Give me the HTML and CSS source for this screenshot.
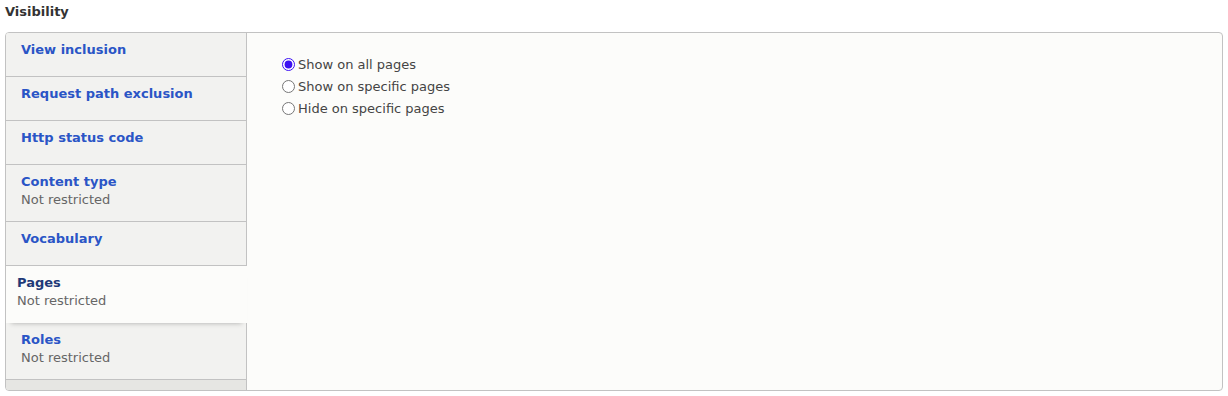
FILE: index.html
```html
<!DOCTYPE html>
<html lang="en">
<head>
  <meta charset="UTF-8">
  <title>Visibility</title>
  <link rel="stylesheet" href="styles.css">
</head>
<body>
  <div class="field">
    <div class="field-label">Visibility</div>
    <div class="vertical-tabs">
      <ul class="tabs-menu">
        <li class="tab"><a href="#">View inclusion</a><span class="summary"></span></li>
        <li class="tab"><a href="#">Request path exclusion</a><span class="summary"></span></li>
        <li class="tab"><a href="#">Http status code</a><span class="summary"></span></li>
        <li class="tab"><a href="#">Content type</a><span class="summary">Not restricted</span></li>
        <li class="tab"><a href="#">Vocabulary</a><span class="summary"></span></li>
        <li class="tab is-selected"><a href="#">Pages</a><span class="summary">Not restricted</span></li>
        <li class="tab"><a href="#">Roles</a><span class="summary">Not restricted</span></li>
      </ul>
      <div class="tabs-pane">
        <label class="option"><input type="radio" name="pages" checked> Show on all pages</label>
        <label class="option"><input type="radio" name="pages"> Show on specific pages</label>
        <label class="option"><input type="radio" name="pages"> Hide on specific pages</label>
      </div>
    </div>
  </div>
</body>
</html>
```

FILE: styles.css
```css
body {
  margin: 0;
  font-family: 'DejaVu Sans', sans-serif;
  font-size: 13px;
  color: #333;
  background: #fff;
}
.field {
  padding: 3px 5px;
}
.field-label {
  font-weight: bold;
  line-height: 18px;
  margin-bottom: 11px;
  color: #333;
}
.vertical-tabs {
  display: flex;
  height: 357px;
  border: 1px solid #c2c2c2;
  border-radius: 4px;
  background: #fcfcfa;
  overflow: hidden;
}
.tabs-menu {
  list-style: none;
  margin: 0;
  padding: 0;
  width: 240px;
  flex-shrink: 0;
  background: #e6e6e3;
  border-right: 1px solid #c2c2c2;
}
.tab {
  background: #f2f2f0;
  border-bottom: 1px solid #c2c2c2;
  padding: 8px 15px 12px;
  line-height: 18px;
}
.tab a {
  display: block;
  color: #2a55c6;
  font-weight: bold;
  text-decoration: none;
}
.tab .summary {
  display: block;
  min-height: 5px;
  color: #666;
}
.tab.is-selected {
  position: relative;
  z-index: 1;
  margin-right: -1px;
  padding-left: 11px;
  background: #fcfcfa;
  border-bottom-color: transparent;
  box-shadow: 0 5px 5px -5px rgba(0, 0, 0, 0.3);
}
.tab.is-selected a {
  color: #1f3a78;
}
.tabs-pane {
  flex: 1;
  padding: 20px 30px;
}
.option {
  display: flex;
  align-items: center;
  height: 22px;
  color: #444;
}
.option input {
  margin: 0 3px 0 5px;
  width: 13px;
  height: 13px;
  accent-color: #3c10f2;
}
```
